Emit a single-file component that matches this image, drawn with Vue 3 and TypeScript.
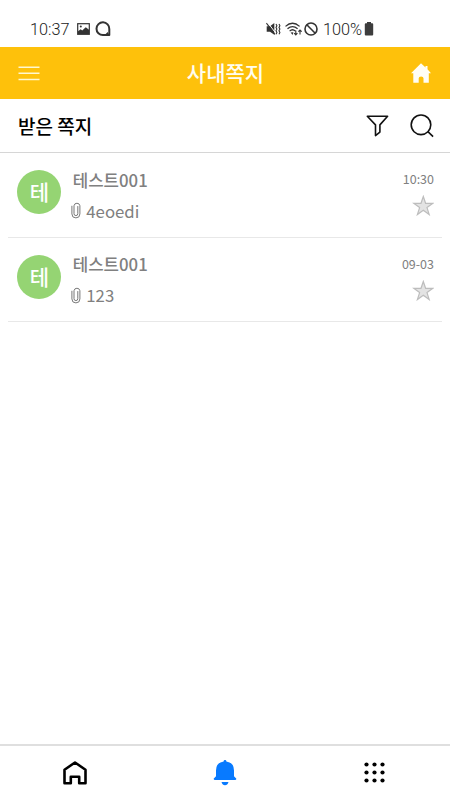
<script setup lang="ts">
interface Message {
  id: number
  initial: string
  sender: string
  preview: string
  time: string
}

const messages: Message[] = [
  { id: 1, initial: '테', sender: '테스트001', preview: '4eoedi', time: '10:30' },
  { id: 2, initial: '테', sender: '테스트001', preview: '123', time: '09-03' },
]

const dots = [2.5, 10.5, 18.5]
</script>

<template>
  <div class="screen">
    <div class="status">
      <div class="status-left">
        <span class="clock">10:37</span>
        <svg class="i-picture" width="13" height="12" viewBox="0 0 13 12">
          <rect x=".7" y=".7" width="11.6" height="10.6" fill="none" stroke="#333" stroke-width="1.2" />
          <path d="M1 8.2 3.7 6.3 5.2 7.4 8.8 4.3 12 6.8V11H1Z" fill="#333" />
          <circle cx="3.8" cy="3.6" r="1" fill="#333" />
        </svg>
        <svg class="i-chat" width="16" height="16" viewBox="0 0 16 16">
          <path d="M14.3 14.1V8A6.4 6.4 0 1 0 8 14.1Z" fill="none" stroke="#333" stroke-width="2" stroke-linejoin="round" />
          <path d="m10.2 13.6 2.5-2.5 1.5 2.8Z" fill="#333" />
        </svg>
      </div>
      <div class="status-right">
        <svg width="15" height="16" viewBox="0 0 15 16">
          <path d="M.7 5.3H4L8.3 2v11.8L4 10.7H.7Z" fill="#333" />
          <path d="m1.4 1.2 8 10.5" stroke="#fff" stroke-width="1" />
          <path d="m.4 2.1 8.5 11.3" stroke="#333" stroke-width="1.1" />
          <path d="m10 3 .9 1.700-.9 1.700.9 1.700-.9 1.700.9 1.700-.9 1.700M13 3l.9 1.700-.9 1.700.9 1.700-.9 1.700.9 1.700-.9 1.700" fill="none" stroke="#333" stroke-width="1.1" />
        </svg>
        <svg class="i-wifi" width="18" height="16" viewBox="0 0 18 16">
          <g fill="none" stroke="#333" stroke-width="1.25">
            <path d="M.5 5.4Q7.5-.9 14.6 5.4M2.5 7.8q5-4.5 10.1 0M4.6 10.1q2.9-2.7 5.9 0" />
            <path d="M10.8 9.5V14M9.2 12.2l1.6 1.7 1.6-1.7M15 13.5V9M13.4 10.7 15 9l1.7 1.7" stroke-width="1.1" />
          </g>
          <path d="m5.6 11.6 2 2.4.8-2.7Z" fill="#333" />
        </svg>
        <svg class="i-block" width="14" height="14" viewBox="0 0 14 14">
          <g fill="none" stroke="#333" stroke-width="1.6"><circle cx="7" cy="7" r="6" /><path d="m2.8 2.8 8.4 8.4" /></g>
        </svg>
        <span class="battery-text">100%</span>
        <svg class="i-battery" width="10" height="14" viewBox="0 0 10 14">
          <path d="M3 0h4v1.3h1.2Q9.2 1.3 9.2 2.3v10.2q0 1-1 1H1.8q-1 0-1-1V2.3q0-1 1-1H3Z" fill="#3d3d3d" />
        </svg>
      </div>
    </div>

    <header class="appbar">
      <svg width="22" height="16" viewBox="0 0 22 16">
        <path d="M.5 2.2h21M.5 8.3h21M.5 14.4h21" stroke="#fff8cf" stroke-width="1.5" />
      </svg>
      <h1>사내쪽지</h1>
      <svg width="20" height="21" viewBox="0 0 20 21">
        <path d="M10 .3 14.5 4.4V3h2v3.3L20 10.3h-2.200V19.700h-5.300v-4.500q0-1.800-2.400-1.800t-2.400 1.800v4.500H2.300v-9.400H0Z" fill="#fffef5" />
      </svg>
    </header>

    <section class="subbar">
      <h2>받은 쪽지</h2>
      <svg class="i-filter" width="23" height="22" viewBox="0 0 23 22">
        <path d="M1.3 1.3h20.3l-7.700 8.600v7.200l-4.400 3.500V9.900Z" fill="none" stroke="#111" stroke-width="1.600" stroke-linejoin="round" />
      </svg>
      <svg width="24" height="24" viewBox="0 0 24 24">
        <g fill="none" stroke="#111" stroke-width="1.6"><circle cx="11" cy="10.8" r="9.8" /><path d="m17.9 17.7 5.2 5" /></g>
      </svg>
    </section>

    <main class="list">
      <article v-for="m in messages" :key="m.id" class="message">
        <div class="avatar">{{ m.initial }}</div>
        <div class="body">
          <div class="sender">{{ m.sender }}</div>
          <div class="preview">
            <svg width="10" height="17" viewBox="0 0 10 17">
              <path d="M.9 4.2v7.7a4 4 0 0 0 8 0V3.7a3 3 0 0 0-5.9 0v8a1.9 1.9 0 0 0 3.8 0V4.5" fill="none" stroke="#777" stroke-width="1" stroke-linecap="round" />
            </svg>
            <span>{{ m.preview }}</span>
          </div>
        </div>
        <div class="meta">
          <time>{{ m.time }}</time>
          <svg width="22" height="21" viewBox="0 0 22 21">
            <path d="m11.3 1.5 2.3 6.800h7.300l-5.900 4.300 2.200 7-5.900-4.300-5.900 4.300 2.200-7-5.900-4.300h7.300Z" fill="#e3e3e3" stroke="#bdbdbd" stroke-width="1.200" />
          </svg>
        </div>
      </article>
    </main>

    <nav class="tabs">
      <div class="tab">
        <svg width="24" height="24" viewBox="0 0 24 24">
          <path d="M1.5 22.2V8.8L12 1.5l10.5 7.300v13.400h-6.300v-6.500H7.800v6.500Z" fill="none" stroke="#000" stroke-width="2.600" stroke-linejoin="round" />
        </svg>
      </div>
      <div class="tab">
        <svg width="24" height="26" viewBox="0 0 24 26">
          <path d="M10.6 1.4a1.4 1.4 0 0 1 2.8 0q7.600 1.300 7.600 9v5.800l2.200 2.200q.5 1.700-1.200 1.700H2Q.3 20.100.8 18.400L3 16.200V10.400q0-7.700 7.600-9ZM8.500 22h7q-1 3.200-3.500 3.200T8.500 22Z" fill="#087aff" />
        </svg>
      </div>
      <div class="tab">
        <svg class="i-apps" width="21" height="21" viewBox="0 0 21 21">
          <template v-for="y in dots" :key="y">
            <circle v-for="x in dots" :key="x" :cx="x" :cy="y" r="2.1" />
          </template>
        </svg>
      </div>
    </nav>
  </div>
</template>

<style>
body {
  background: #fff;
}
</style>

<style scoped>
.screen {
  display: flex;
  flex-direction: column;
  width: 450px;
  height: 800px;
  background: #fff;
  font-family: "Noto Sans CJK KR", sans-serif;
}
svg {
  display: block;
  flex: none;
}
.status {
  display: flex;
  justify-content: space-between;
  box-sizing: border-box;
  height: 47px;
  padding: 11px 76px 0 30px;
  font: 300 16.3px/37px Roboto, sans-serif;
  color: #222;
}
.status-left,
.status-right {
  display: flex;
  align-items: center;
  height: 35px;
}
.clock {
  width: 47px;
}
.i-chat {
  margin-left: 5px;
}
.i-wifi {
  margin-left: 4px;
}
.i-block {
  margin-left: 1px;
}
.battery-text {
  width: 41px;
  margin-left: 5px;
}
.clock,
.battery-text {
  padding-top: 1px;
}
.appbar {
  display: flex;
  align-items: center;
  justify-content: space-between;
  box-sizing: border-box;
  height: 52px;
  padding: 0 19px 0 18px;
  background: #fec10b;
}
h1 {
  margin: 0 0 2px;
  font-size: 21px;
  font-weight: 500;
  line-height: 30px;
  color: #fffdf0;
}
.subbar {
  display: flex;
  align-items: center;
  box-sizing: border-box;
  height: 54px;
  padding: 0 16px 0 18px;
  border-bottom: 1px solid #d6d6d6;
}
h2 {
  flex: 1;
  margin: 0;
  font-size: 19px;
  font-weight: 500;
  line-height: 28px;
  color: #000;
}
.i-filter {
  margin-right: 21px;
}
.list {
  flex: 1;
  padding: 0 8px;
}
.message {
  display: flex;
  box-sizing: border-box;
  height: 84.5px;
  padding: 0 8px 0 9.4px;
  border-bottom: 1px solid #e8e8e8;
}
.avatar {
  width: 44px;
  height: 44px;
  margin-top: 17px;
  border-radius: 50%;
  background: #95d473;
  color: #fff;
  font-size: 21px;
  font-weight: 500;
  line-height: 43px;
  text-align: center;
}
.body {
  flex: 1;
  padding: 13.5px 0 0 11.3px;
}
.sender {
  font-size: 16.8px;
  font-weight: 500;
  line-height: 26px;
  color: #808080;
}
.preview {
  display: flex;
  align-items: center;
  gap: 5px;
  margin: 5px 0 0 -1.4px;
  font-size: 16.8px;
  line-height: 26px;
  color: #808080;
}
.meta {
  display: flex;
  flex-direction: column;
  align-items: flex-end;
  padding-top: 16px;
}
time {
  margin-bottom: 6px;
  font-size: 12.5px;
  line-height: 20px;
  color: #808080;
}
.tabs {
  display: flex;
  box-sizing: border-box;
  height: 56px;
  border-top: 2px solid #dfdfdf;
}
.tab {
  flex: 1;
  display: flex;
  align-items: center;
  justify-content: center;
}
.i-apps {
  margin: 0 1px 1px 0;
}
</style>
